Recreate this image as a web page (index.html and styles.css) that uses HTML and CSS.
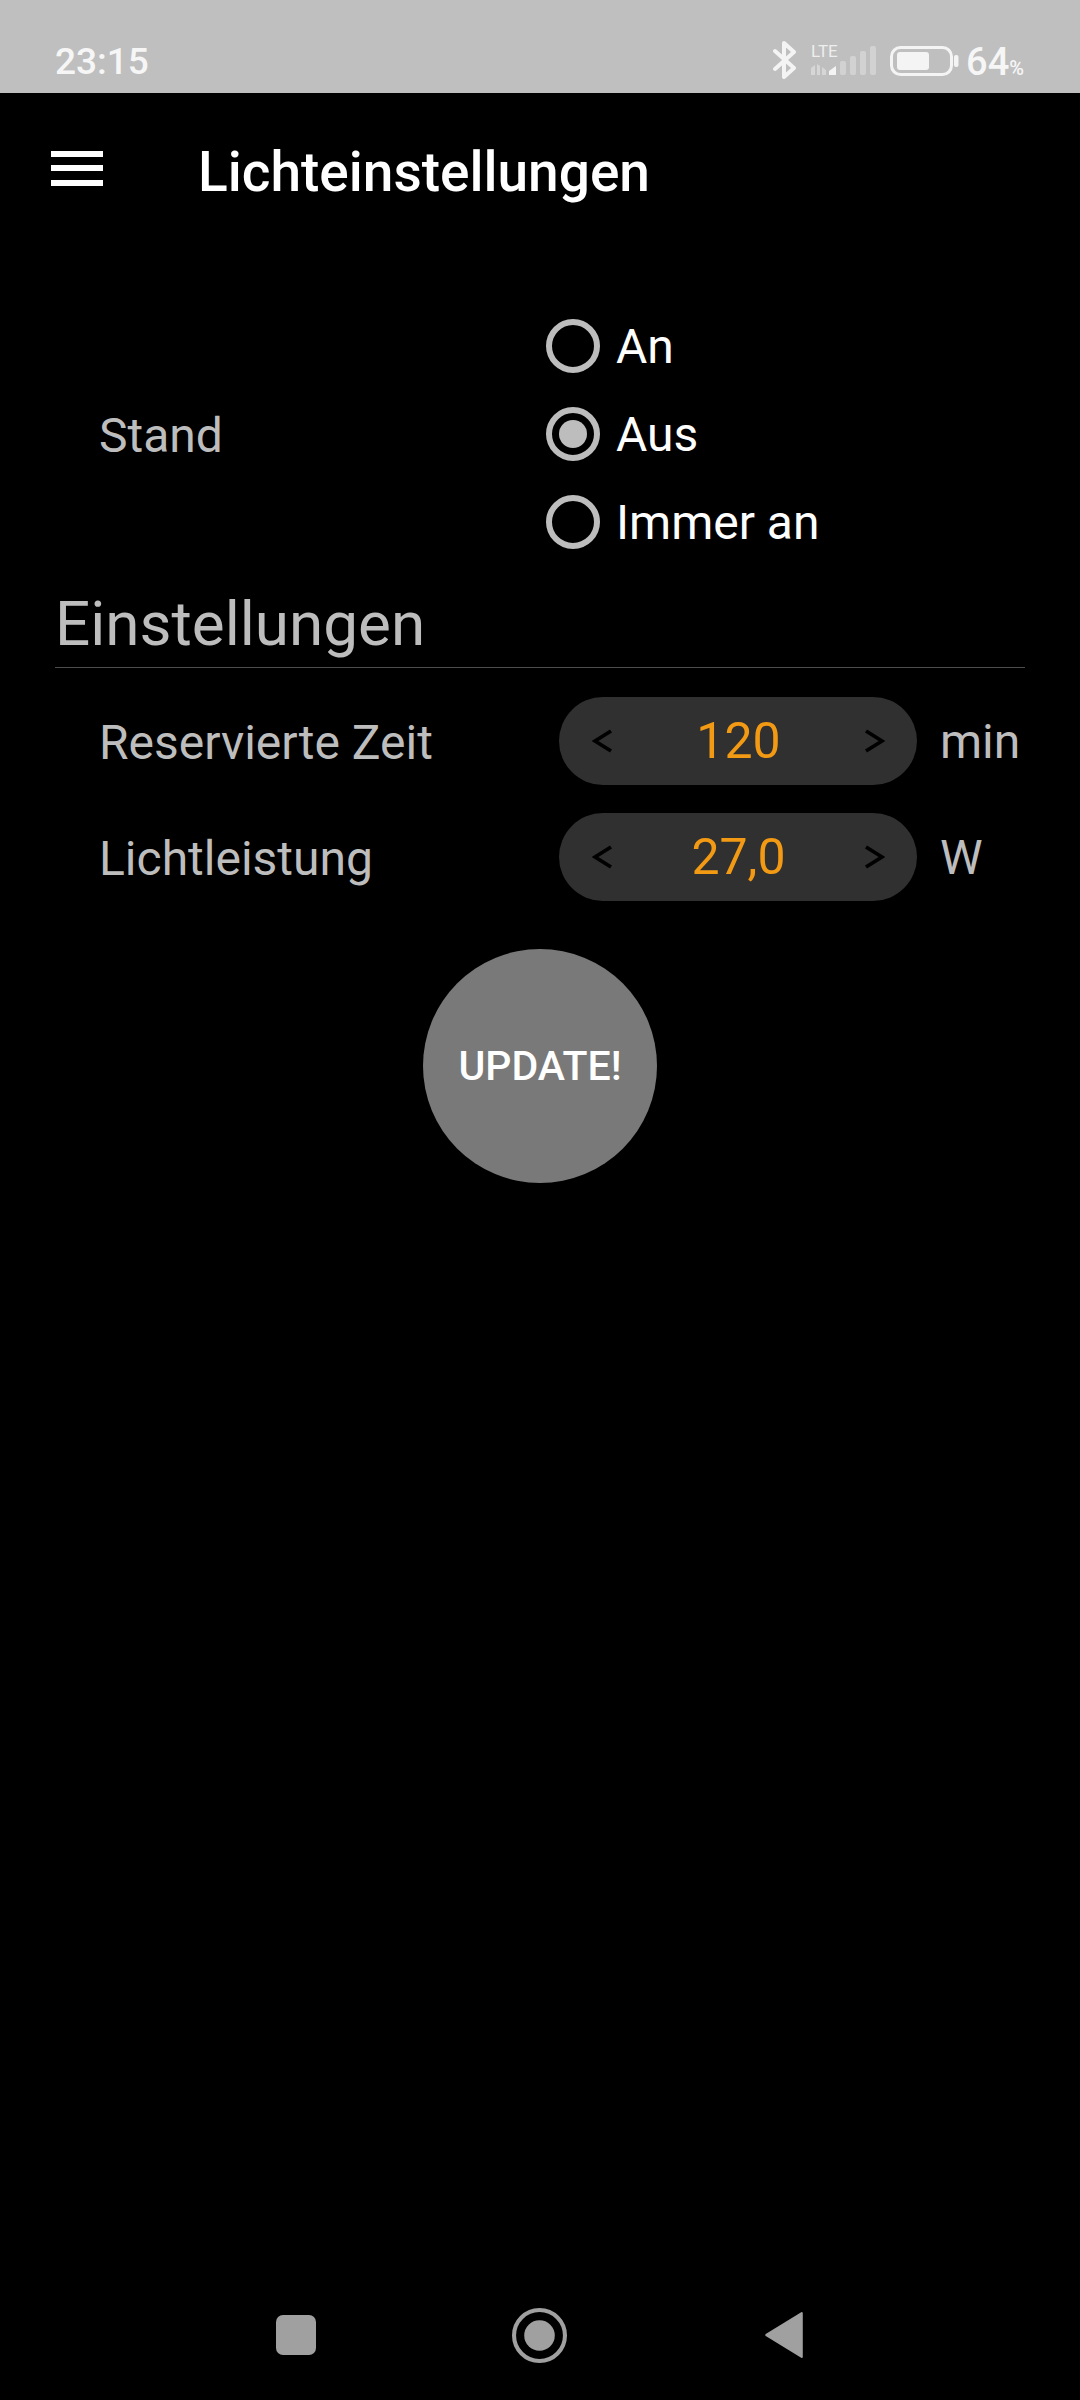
FILE: index.html
```html
<!DOCTYPE html>
<html lang="de">
<head>
<meta charset="utf-8">
<title>Lichteinstellungen</title>
<link rel="stylesheet" href="styles.css">
</head>
<body>
<div class="screen">
  <header class="statusbar">
    <span class="clock">23:15</span>
    <div class="status-icons">
      <svg class="bt" width="24" height="38" viewBox="0 0 24 38"><path d="M2 10 L21 27 L11 36 V2 L21 11 L2 28" fill="none" stroke="#f4f4f4" stroke-width="4" stroke-linejoin="round" stroke-linecap="round"/></svg>
      <div class="net">
        <span class="lte">LTE</span>
        <svg class="signal" width="68" height="30" viewBox="0 0 68 30">
          <path d="M2 29V22L6 19V29ZM8 29V18L11 20V29ZM13 29V21L17 24V29Z" fill="#d6d6d6"/>
          <path d="M20 29V25L27 20V29Z" fill="#f4f4f4"/>
          <rect x="31" y="15" width="6" height="14" rx="2" fill="#d2d2d2"/>
          <rect x="41" y="10" width="6" height="19" rx="2" fill="#d2d2d2"/>
          <rect x="51" y="5" width="6" height="24" rx="2" fill="#d2d2d2"/>
          <rect x="61" y="0" width="6" height="29" rx="2" fill="#d2d2d2"/>
        </svg>
      </div>
      <svg class="battery" width="70" height="30" viewBox="0 0 70 30">
        <rect x="1.5" y="1.5" width="60" height="27" rx="9" fill="none" stroke="#f4f4f4" stroke-width="3"/>
        <rect x="7" y="6" width="32" height="18" rx="3" fill="#f4f4f4"/>
        <rect x="64" y="9" width="4.5" height="12" rx="2" fill="#f4f4f4"/>
      </svg>
      <span class="percent">64<small>%</small></span>
    </div>
  </header>

  <nav class="appbar">
    <div class="menu"><i></i><i></i><i></i></div>
    <h1 class="title">Lichteinstellungen</h1>
  </nav>

  <main class="content">
    <section class="state-row">
      <span class="label state-label">Stand</span>
      <div class="radios">
        <div class="radio-item"><span class="radio"></span><span>An</span></div>
        <div class="radio-item"><span class="radio checked"></span><span>Aus</span></div>
        <div class="radio-item"><span class="radio"></span><span>Immer an</span></div>
      </div>
    </section>

    <h2 class="section-title">Einstellungen</h2>

    <div class="settings">
      <div class="setting-row">
        <span class="label setting-label">Reservierte Zeit</span>
        <div class="stepper">
          <svg class="chev" width="21" height="24" viewBox="0 0 21 24"><path d="M19 2 L3 12 L19 22" fill="none" stroke="#000" stroke-width="3.8"/></svg>
          <span class="value">120</span>
          <svg class="chev" width="21" height="24" viewBox="0 0 21 24"><path d="M2 2 L18 12 L2 22" fill="none" stroke="#000" stroke-width="3.8"/></svg>
        </div>
        <span class="unit">min</span>
      </div>
      <div class="setting-row">
        <span class="label setting-label">Lichtleistung</span>
        <div class="stepper">
          <svg class="chev" width="21" height="24" viewBox="0 0 21 24"><path d="M19 2 L3 12 L19 22" fill="none" stroke="#000" stroke-width="3.8"/></svg>
          <span class="value">27,0</span>
          <svg class="chev" width="21" height="24" viewBox="0 0 21 24"><path d="M2 2 L18 12 L2 22" fill="none" stroke="#000" stroke-width="3.8"/></svg>
        </div>
        <span class="unit">W</span>
      </div>
    </div>

    <div class="update-wrap"><button class="update">UPDATE!</button></div>
  </main>

  <footer class="navbar">
    <span class="nav-square"></span>
    <svg class="nav-home" width="55" height="55" viewBox="0 0 54 54"><circle cx="27" cy="27" r="25" fill="none" stroke="#a0a0a0" stroke-width="4"/><circle cx="27" cy="27" r="15" fill="#a0a0a0"/></svg>
    <svg class="nav-back" width="40" height="48" viewBox="0 0 38 46"><path d="M36 2 V44 L2 23 Z" fill="#a0a0a0" stroke="#a0a0a0" stroke-width="2" stroke-linejoin="round"/></svg>
  </footer>
</div>
</body>
</html>
```

FILE: styles.css
```css
* { box-sizing: border-box; }
html, body { margin: 0; padding: 0; background: #000; }
body { font-family: Roboto, "Noto Sans", sans-serif; }
.screen { width: 1080px; height: 2400px; display: flex; flex-direction: column; background: #000; color: #fff; }

.statusbar { height: 93px; background: #bfbfbf; display: flex; justify-content: space-between; padding: 41px 56px 0 55px; color: #f6f6f6; flex: none; }
.clock { font-size: 37px; line-height: 42px; font-weight: 500; }
.status-icons { display: flex; align-items: flex-start; }
.bt { margin-right: 12px; }
.net { position: relative; width: 68px; height: 38px; margin-right: 13px; }
.lte { position: absolute; left: 2px; top: 1px; font-size: 17px; line-height: 18px; color: #eee; }
.signal { position: absolute; left: 0; top: 5px; }
.battery { margin: 5px 6px 0 0; }
.percent { font-size: 38px; line-height: 42px; font-weight: 500; }
.percent small { font-size: 20px; }

.appbar { height: 150px; display: flex; align-items: center; padding-left: 51px; flex: none; }
.menu { width: 52px; height: 35px; display: flex; flex-direction: column; justify-content: space-between; margin-right: 95px; }
.menu i { display: block; height: 6px; background: #fff; }
.title { margin: 8px 0 0; font-size: 55px; font-weight: 500; line-height: 60px; }

.content { flex: 1; padding: 0 55px; }
.state-row { display: flex; align-items: center; padding: 59px 0 0 44px; }
.label { color: #bdbdbd; font-size: 48px; line-height: 54px; }
.state-label { width: 447px; padding-top: 3px; }
.radios { display: flex; flex-direction: column; }
.radio-item { height: 88px; display: flex; align-items: center; gap: 16px; font-size: 48px; color: #fff; }
.radio { width: 54px; height: 54px; border: 6px solid #bdbdbd; border-radius: 50%; display: flex; align-items: center; justify-content: center; }
.radio.checked::after { content: ""; width: 28px; height: 28px; border-radius: 50%; background: #bdbdbd; }

.section-title { margin: 23px 0 0; font-size: 62px; font-weight: 400; line-height: 70px; color: #bdbdbd; padding-bottom: 8px; border-bottom: 1px solid #4c4c4c; }

.settings { display: flex; flex-direction: column; gap: 28px; padding: 29px 0 0 44px; }
.setting-row { display: flex; align-items: center; height: 88px; }
.setting-label { width: 460px; padding-top: 3px; }
.stepper { width: 358px; height: 88px; border-radius: 44px; background: #303030; display: flex; align-items: center; justify-content: space-between; padding: 0 32px 0 33px; }
.value { color: #f39a14; font-size: 50px; }
.unit { color: #bdbdbd; font-size: 48px; margin-left: 23px; }

.update-wrap { display: flex; justify-content: center; padding-top: 48px; }
.update { width: 234px; height: 234px; border: 0; border-radius: 50%; background: #797979; color: #fff; font-family: inherit; font-size: 41px; font-weight: 500; padding: 0; }

.navbar { flex: none; height: 92px; display: flex; align-items: flex-start; }
.nav-square { width: 40px; height: 40px; border-radius: 7px; background: #a0a0a0; margin: 7px 0 0 276px; }
.nav-home { margin: 0 0 0 196px; }
.nav-back { margin: 3px 0 0 197px; }
```
